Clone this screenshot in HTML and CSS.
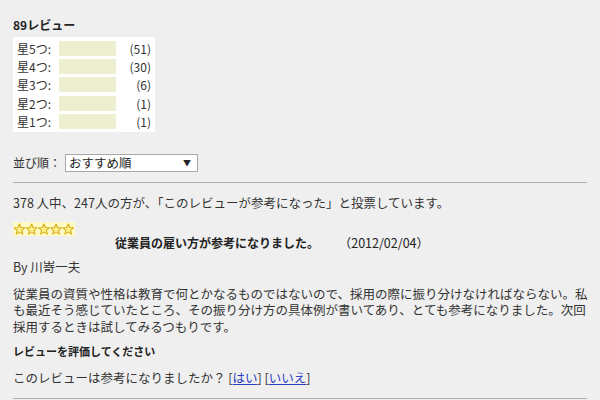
FILE: index.html
```html
<!DOCTYPE html>
<html lang="ja">

<head>
    <meta charset="UTF-8">
    <title>レビュー</title>
    <link rel="stylesheet" href="styles.css">
</head>

<body>
    <h2 class="summary-title">89レビュー</h2>

    <div class="histogram">
        <div class="hist-row"><span class="hist-label">星5つ:</span><span class="hist-bar"></span><span class="hist-count">(51)</span></div>
        <div class="hist-row"><span class="hist-label">星4つ:</span><span class="hist-bar"></span><span class="hist-count">(30)</span></div>
        <div class="hist-row"><span class="hist-label">星3つ:</span><span class="hist-bar"></span><span class="hist-count">(6)</span></div>
        <div class="hist-row"><span class="hist-label">星2つ:</span><span class="hist-bar"></span><span class="hist-count">(1)</span></div>
        <div class="hist-row"><span class="hist-label">星1つ:</span><span class="hist-bar"></span><span class="hist-count">(1)</span></div>
    </div>

    <div class="sort-row">
        <label for="sort">並び順：</label>
        <div class="sort-select" id="sort">
            <span>おすすめ順</span>
            <span class="arrow">&#x25BC;</span>
        </div>
    </div>

    <hr class="divider">

    <div class="review">
        <p class="votes">378 人中、247人の方が、「このレビューが参考になった」と投票しています。</p>

        <div class="stars">
            <svg width="62" height="14" viewBox="0 0 62 14">
                <defs>
                    <path id="star" d="M6 0.8 L7.5 4.3 L11.3 4.6 L8.4 7.1 L9.3 10.9 L6 8.9 L2.7 10.9 L3.6 7.1 L0.7 4.6 L4.5 4.3 Z" />
                </defs>
                <rect x="0" y="0" width="62" height="14" fill="#fff9c4" />
                <use href="#star" x="0.5" y="1.2" fill="#ffef8a" stroke="#d4b020" stroke-width="1.1" stroke-linejoin="round" />
                <use href="#star" x="12.7" y="1.2" fill="#ffef8a" stroke="#d4b020" stroke-width="1.1" stroke-linejoin="round" />
                <use href="#star" x="24.9" y="1.2" fill="#ffef8a" stroke="#d4b020" stroke-width="1.1" stroke-linejoin="round" />
                <use href="#star" x="37.1" y="1.2" fill="#ffef8a" stroke="#d4b020" stroke-width="1.1" stroke-linejoin="round" />
                <use href="#star" x="49.3" y="1.2" fill="#ffef8a" stroke="#d4b020" stroke-width="1.1" stroke-linejoin="round" />
            </svg>
        </div>

        <div class="review-head">
            <b>従業員の雇い方が参考になりました。</b>
            <span class="date">（2012/02/04）</span>
        </div>

        <p class="author">By 川嵜一夫</p>

        <p class="body-text">従業員の資質や性格は教育で何とかなるものではないので、採用の際に振り分けなければならない。私も最近そう感じていたところ、その振り分け方の具体例が書いてあり、とても参考になりました。次回採用するときは試してみるつもりです。</p>

        <p class="rate-title">レビューを評価してください</p>

        <p class="helpful">このレビューは参考になりましたか？ [<a href="#">はい</a>] [<a href="#">いいえ</a>]</p>
    </div>

    <hr class="divider">
</body>

</html>
```

FILE: styles.css
```css
body {
    background-color: #efefef;
    margin: 0;
    padding: 17px 13px 0 13px;
    color: #333;
    font-family: 'Noto Sans CJK JP', 'Noto Sans', sans-serif;
    font-size: 12.5px;
}

p {
    margin: 0;
}

.summary-title {
    margin: 0;
    font-size: 12px;
    line-height: 16px;
    font-weight: bold;
    color: #222;
}

.histogram {
    background-color: #ffffff;
    width: 134px;
    margin-top: 4px;
    padding: 2px 4px 1px 4px;
}

.hist-row {
    display: flex;
    align-items: center;
    height: 18.4px;
    font-size: 12px;
}

.hist-label {
    width: 42px;
}

.hist-bar {
    width: 57px;
    height: 15px;
    background-color: #eeeed0;
}

.hist-count {
    flex: 1;
    text-align: right;
}

.sort-row {
    display: flex;
    align-items: center;
    margin-top: 22px;
    font-size: 12px;
}

.sort-row label {
    width: 52px;
}

.sort-select {
    display: flex;
    align-items: center;
    justify-content: space-between;
    width: 122px;
    height: 16px;
    padding: 0 6px 0 3px;
    background-color: #fff;
    border: 1px solid #a8a8a8;
    font-size: 12.5px;
    color: #222;
}

.arrow {
    font-size: 8px;
    color: #222;
}

.divider {
    border: none;
    border-top: 1px solid #b0b0b0;
    margin: 10px 0 0 0;
    height: 0;
}

.votes {
    margin-top: 11px;
    line-height: 17px;
}

.stars {
    margin-top: 11px;
    height: 14px;
}

.stars svg {
    display: block;
}

.review-head {
    padding-left: 102px;
    line-height: 13px;
    font-size: 12px;
    color: #222;
}

.date {
    margin-left: 17px;
    font-size: 12.5px;
}

.author {
    margin-top: 9px;
    line-height: 17px;
}

.body-text {
    margin-top: 11px;
    line-height: 16.5px;
    width: 576px;
}

.rate-title {
    margin-top: 8px;
    font-size: 11px;
    font-weight: bold;
    color: #222;
    line-height: 16px;
}

.helpful {
    margin-top: 10px;
    line-height: 17px;
}

.helpful a {
    color: #2a3cc4;
    text-decoration: underline;
}

.review + .divider {
    margin-top: 12px;
}
```
